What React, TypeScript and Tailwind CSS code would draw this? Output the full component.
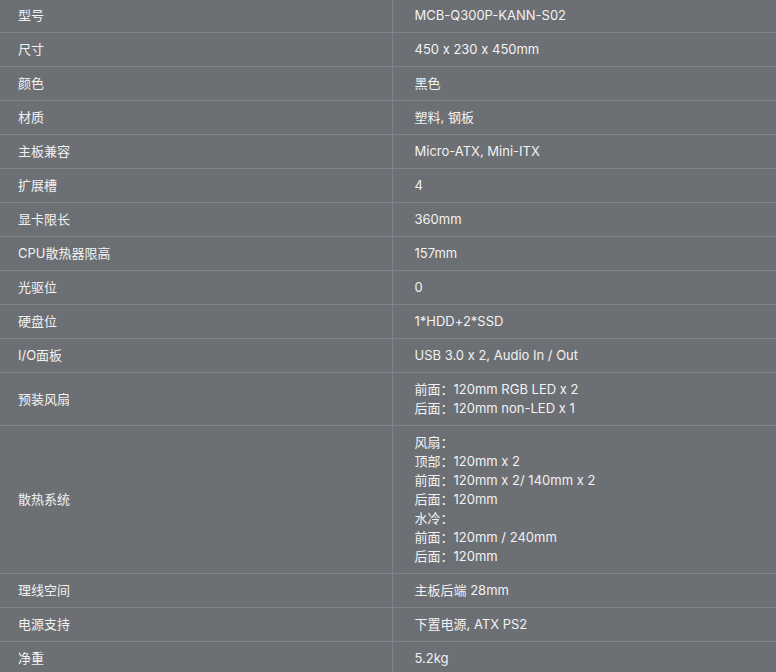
import React from 'react';

type Spec = { label: string; value: string[] };

const specs: Spec[] = [
  { label: '型号', value: ['MCB-Q300P-KANN-S02'] },
  { label: '尺寸', value: ['450 x 230 x 450mm'] },
  { label: '颜色', value: ['黑色'] },
  { label: '材质', value: ['塑料, 钢板'] },
  { label: '主板兼容', value: ['Micro-ATX, Mini-ITX'] },
  { label: '扩展槽', value: ['4'] },
  { label: '显卡限长', value: ['360mm'] },
  { label: 'CPU散热器限高', value: ['157mm'] },
  { label: '光驱位', value: ['0'] },
  { label: '硬盘位', value: ['1*HDD+2*SSD'] },
  { label: 'I/O面板', value: ['USB 3.0 x 2, Audio In / Out'] },
  { label: '预装风扇', value: ['前面：120mm RGB LED x 2', '后面：120mm non-LED x 1'] },
  {
    label: '散热系统',
    value: [
      '风扇：',
      '顶部：120mm x 2',
      '前面：120mm x 2/ 140mm x 2',
      '后面：120mm',
      '水冷：',
      '前面：120mm / 240mm',
      '后面：120mm',
    ],
  },
  { label: '理线空间', value: ['主板后端 28mm'] },
  { label: '电源支持', value: ['下置电源, ATX PS2'] },
  { label: '净重', value: ['5.2kg'] },
];

export default function App() {
  return (
    <div
      className="w-[776px] h-[672px] overflow-hidden bg-[#6c6f74] text-[13px] leading-[19px] text-[#f2f2f2] [font-feature-settings:'calt'_0]"
      style={{ fontFamily: 'Inter, "Noto Sans CJK SC", sans-serif' }}
    >
      <table className="-mt-px w-full border-collapse">
        <tbody>
          {specs.map((s) => (
            <tr key={s.label} className="border-b border-[#80838a]">
              <td className="w-[392px] border-r border-[#80838a] py-[7px] pl-[18px] align-middle">
                {s.label}
              </td>
              <td className="py-[7px] pl-[22px] align-middle">
                {s.value.map((v) => (
                  <div key={v}>{v}</div>
                ))}
              </td>
            </tr>
          ))}
        </tbody>
      </table>
    </div>
  );
}
